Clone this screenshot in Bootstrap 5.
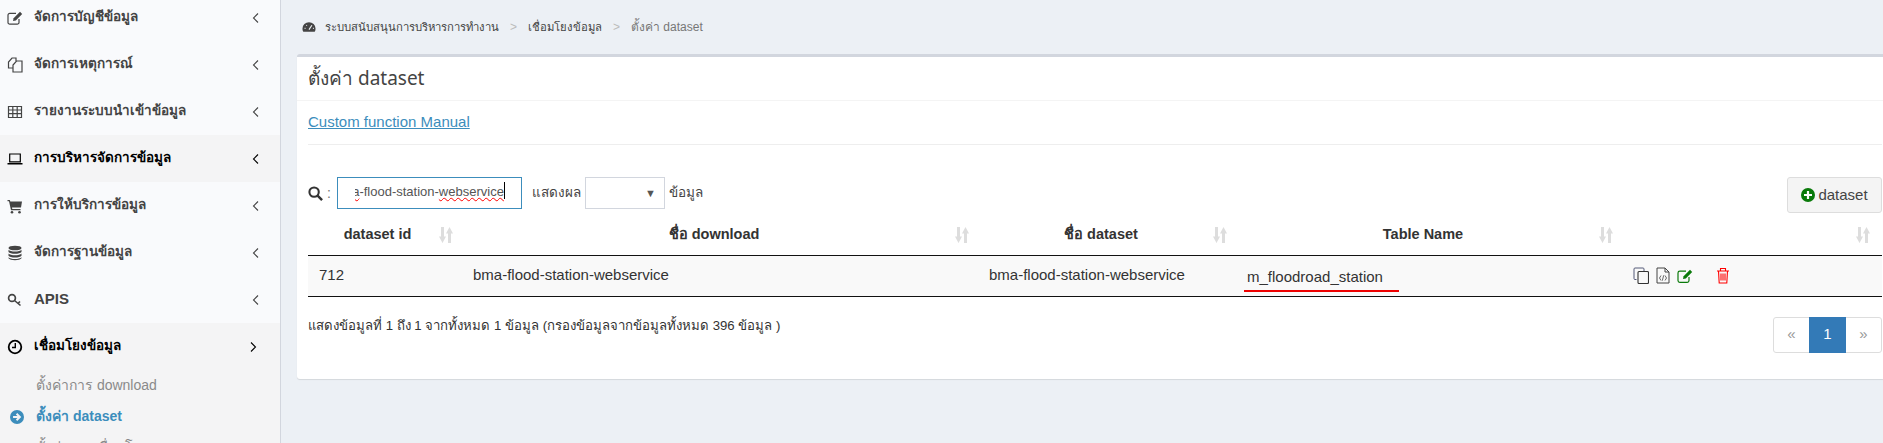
<!DOCTYPE html>
<html lang="th">
<head>
<meta charset="utf-8">
<title>ตั้งค่า dataset</title>
<link rel="stylesheet" href="https://cdn.jsdelivr.net/npm/bootstrap@5.3.0/dist/css/bootstrap.min.css">
<style>
html,body{height:443px;overflow:hidden}
body{background:#ecf0f5;font-family:"Liberation Sans","Noto Sans",sans-serif;font-size:15px;color:#333}
.app-shell{height:443px;overflow:hidden}
.side-col{width:281px;flex:none;background:#f9fafc;border-right:1px solid #d2d6de;overflow:hidden;height:443px;font-size:13.5px}
.side-list{margin:-6px 0 0;padding:0;list-style:none}
.side-row{height:47px;padding:0 20px 0 7px;font-weight:700;color:#444;gap:11px}
.side-row .ico{width:16px;height:16px;flex:none}
.side-row .lbl{flex:1}
.side-row .lbl-latin{font-size:15px}
.side-row.on{background:#f4f4f5;color:#000}
.side-open{background:#f4f4f5}
.side-open .side-row{color:#000;padding-right:23px}
.sub-row{height:31px;padding-left:36px;color:#8a8a8a;font-size:14px}
.sub-row.cur{color:#3c8dbc;font-weight:700;padding-left:10px;gap:12px}
.sub-row.cur svg{width:14px;height:14px;flex:none}
.crumb-bar{height:54px;padding-left:21px;font-size:11.3px;color:#444;gap:9px}
.crumb-sep{color:#bbb;margin:0 2px;font-size:12px}
.crumb-last{color:#777;font-size:12px}
.crumb-ico{width:14px;height:14px}
.main-box{margin-left:16px;height:325px;background:#fff;border-top:3px solid #d2d6de;border-radius:3px 0 0 3px;box-shadow:0 1px 1px rgba(0,0,0,.1)}
.box-head{height:44px;padding:0 11px;border-bottom:1px solid #f4f4f4;font-family:"Noto Sans",sans-serif;font-size:19px;color:#444}
.box-link-wrap{margin:0 1px 0 11px;height:44px;border-bottom:1px solid #eee}
.box-link{color:#3c8dbc}
.tool-row{margin:32px 1px 0 11px;height:36px;font-size:14px}
.q-ico{width:15px;height:15px}
.q-colon{margin:0 6px 0 4px;color:#777}
.fake-input{width:185px;height:32px;border:1px solid #3c8dbc;padding:0 16px 0 17px;color:#555;overflow:hidden;white-space:nowrap;border-radius:0;font-size:13px}
.fake-input .clip{overflow:hidden;display:flex;justify-content:flex-end;width:100%;padding-bottom:2px}
.spell{text-decoration:underline wavy red 1px}
.caret-mark{border-right:1px solid #000;height:17px}
.len-wrap{margin-left:10px;gap:4px;color:#444;font-size:13.5px}
.len-select{width:80px;height:32px;border:1px solid #d2d6de;padding-right:8px;color:#555;font-size:11px}
.add-btn{height:36px;width:95px;margin-left:auto;background:#f4f4f4;border:1px solid #ddd;border-radius:3px;color:#444;font-size:15px;padding:0;gap:3px}
.add-btn svg{width:14px;height:14px}
.data-wrap{margin:1px 1px 0 11px}
.data-table{table-layout:fixed;width:1574px;margin:0;border-collapse:collapse}
.data-table th{height:41px;padding:1px 12px 0 8px;border-bottom:1px solid #111;font-weight:700;font-size:14.5px;color:#333;background:#fff;vertical-align:middle}
.data-table td{height:41px;padding:0 8px;background:#f9f9f9;border-bottom:1px solid #111;color:#333;vertical-align:middle;box-shadow:none}
.data-table td:first-child{padding-left:11px}
.sort-ico{width:14px;height:16px;flex:none}
.mark-line{display:inline-block;border-bottom:2px solid #e00;padding:0 16px 5px 3px;margin:6px 0 -6px -3px;line-height:1.1}
.act-ico{width:14px;height:17px;flex:none}
.act-ico.wide{width:16px}
.foot-row{margin:20px 1px 0 11px}
.foot-info{line-height:15px;padding-top:1px;color:#333;font-size:13.2px}
.pager{margin:0}
.pager .page-link{width:37px;height:36px;padding:0;display:flex;align-items:center;justify-content:center;color:#999;border-color:#ddd;font-size:15px}
.pager .page-item:first-child .page-link{border-radius:3px 0 0 3px}
.pager .page-item:last-child .page-link{border-radius:0 3px 3px 0}
.pager .page-item.active .page-link{background:#337ab7;border-color:#337ab7;color:#fff}
</style>
</head>
<body>
<svg width="0" height="0" class="d-none">
 <symbol id="i-edit" viewBox="0 0 16 16"><path d="M12 9v3.400A1.800 1.800 0 0 1 10.200 14.200H2.800A1.800 1.800 0 0 1 1 12.400V5.200A1.800 1.800 0 0 1 2.800 3.400H9" fill="none" stroke="currentColor" stroke-width="1.200"/><path d="M6 11l.6-2.800 6.400-6.400 2.200 2.200-6.400 6.400z" fill="currentColor"/></symbol>
 <symbol id="i-files" viewBox="0 0 16 16"><path d="M6 11H1.500V5l3.500-4h4v3" fill="none" stroke="currentColor" stroke-width="1.200"/><path d="M6 15V8l3.500-4H15v11z" fill="none" stroke="currentColor" stroke-width="1.200"/></symbol>
 <symbol id="i-table" viewBox="0 0 16 16"><path d="M1.500 2.500h13v11h-13zM1.500 6h13M1.500 9.700h13M5.800 2.500v11M10.200 2.500v11" fill="none" stroke="currentColor" stroke-width="1.200"/></symbol>
 <symbol id="i-laptop" viewBox="0 0 16 16"><path d="M2.700 3h10.600v7.800H2.700z" fill="none" stroke="currentColor" stroke-width="1.200"/><path d="M.5 12h15v1.500H.5z" fill="currentColor"/></symbol>
 <symbol id="i-cart" viewBox="0 0 16 16"><path d="M.5 2h2.300l.5 1.500H15l-1 6H5l.3 1.500H13.500v1.300H4L2 3.300H.5z" fill="currentColor"/><circle cx="5" cy="14.200" r="1.300" fill="currentColor"/><circle cx="12.500" cy="14.200" r="1.300" fill="currentColor"/></symbol>
 <symbol id="i-db" viewBox="0 0 16 16"><ellipse cx="8" cy="3" rx="6.500" ry="2.300" fill="currentColor"/><path d="M1.500 4.700c1.500 2.400 11.500 2.400 13 0V7c-1.500 2.400-11.500 2.400-13 0zM1.500 8.500c1.500 2.400 11.500 2.400 13 0v2.300c-1.500 2.400-11.500 2.400-13 0zM1.500 12.200c1.500 2.400 11.500 2.400 13 0v1c-1.500 2.600-11.500 2.600-13 0z" fill="currentColor"/></symbol>
 <symbol id="i-key" viewBox="0 0 16 16"><circle cx="5" cy="6" r="3.400" fill="none" stroke="currentColor" stroke-width="1.700"/><path d="M7.500 8.500l6 5M11 11.300l2-1.800" fill="none" stroke="currentColor" stroke-width="1.600"/></symbol>
 <symbol id="i-clock" viewBox="0 0 16 16"><circle cx="8" cy="8" r="6.300" fill="none" stroke="currentColor" stroke-width="1.800"/><path d="M8.300 4v4.500H5" fill="none" stroke="currentColor" stroke-width="1.400"/></symbol>
 <symbol id="i-go" viewBox="0 0 16 16"><circle cx="8" cy="8" r="8" fill="currentColor"/><path d="M3.500 8h7M7.500 4.300L11.300 8l-3.800 3.700" fill="none" stroke="#f4f4f5" stroke-width="2.200"/></symbol>
 <symbol id="i-left" viewBox="0 0 8 12"><path d="M6 1.500L1.500 6 6 10.500" fill="none" stroke="currentColor" stroke-width="1.100"/></symbol>
 <symbol id="i-right" viewBox="0 0 8 12"><path d="M2 1.500L6.500 6 2 10.500" fill="none" stroke="currentColor" stroke-width="1.100"/></symbol>
 <symbol id="i-sort" viewBox="0 0 14 16"><path d="M3.500 0v10" stroke="#ddd" stroke-width="3"/><path d="M0 9.500h7L3.500 16zM7 6.500h7L10.500 0z" fill="#ddd"/><path d="M10.500 16V6" stroke="#ddd" stroke-width="3"/></symbol>
 <symbol id="i-search" viewBox="0 0 16 16"><circle cx="6.500" cy="6.500" r="5" fill="none" stroke="currentColor" stroke-width="2.200"/><path d="M10.200 10.200L15 15" stroke="currentColor" stroke-width="2.600"/></symbol>
 <symbol id="i-gauge" viewBox="0 0 16 16"><path d="M8 2.500a7.500 7.500 0 0 0-7.500 7.500c0 1.500.4 2.600 1 3.500h13c.6-.9 1-2 1-3.500A7.500 7.500 0 0 0 8 2.500z" fill="currentColor"/><path d="M8 11l3.300-5M3 9.500h1M5 5.800l.6.8M12.500 9.500h1" stroke="#ecf0f5" stroke-width="1.300"/></symbol>
 <symbol id="i-plus" viewBox="0 0 14 14"><circle cx="7" cy="7" r="7" fill="#0a7a0a"/><path d="M7 3v8M3 7h8" stroke="#fff" stroke-width="2.200"/></symbol>
 <symbol id="i-copy" viewBox="0 0 16 17"><path d="M3.500 12.500H2a1 1 0 0 1-1-1V2a1 1 0 0 1 1-1h8a1 1 0 0 1 1 1v2" fill="none" stroke="#555a78" stroke-width="1"/><path d="M6 4.500h8.500a1 1 0 0 1 1 1v10a1 1 0 0 1-1 1H6a1 1 0 0 1-1-1v-10a1 1 0 0 1 1-1z" fill="none" stroke="#333" stroke-width="1.100"/></symbol>
 <symbol id="i-code" viewBox="0 0 14 17"><path d="M1 1h8l4 4v11H1zM9 1v4h4" fill="none" stroke="#444" stroke-width="1"/><path d="M5 8.500L3.500 11 5 13.500M9 8.500l1.500 2.500L9 13.500M7.700 8.300l-1.400 5.400" fill="none" stroke="#444" stroke-width=".8"/></symbol>
 <symbol id="i-pen" viewBox="0 0 16 17"><path d="M12 10v3.600A1.800 1.800 0 0 1 10.200 15.400H2.800A1.800 1.800 0 0 1 1 13.600V6A1.800 1.800 0 0 1 2.800 4.200H9" fill="none" stroke="#0a7a0a" stroke-width="1.200"/><path d="M6 12l.6-2.800 6.400-6.400 2.200 2.200-6.400 6.400z" fill="#0a7a0a"/></symbol>
 <symbol id="i-trash" viewBox="0 0 14 17"><path d="M1 4h12M4.500 4V1.500h5V4M2.500 4l.7 12h7.600l.7-12M5 6.500v7M7 6.500v7M9 6.500v7" fill="none" stroke="#f00" stroke-width="1.100"/></symbol>
</svg>
<div class="app-shell d-flex">
 <aside class="side-col">
  <ul class="side-list">
   <li class="side-row d-flex align-items-center"><svg class="ico"><use href="#i-edit"/></svg><span class="lbl">จัดการบัญชีข้อมูล</span><svg width="8" height="12"><use href="#i-left"/></svg></li>
   <li class="side-row d-flex align-items-center"><svg class="ico"><use href="#i-files"/></svg><span class="lbl">จัดการเหตุการณ์</span><svg width="8" height="12"><use href="#i-left"/></svg></li>
   <li class="side-row d-flex align-items-center"><svg class="ico"><use href="#i-table"/></svg><span class="lbl">รายงานระบบนำเข้าข้อมูล</span><svg width="8" height="12"><use href="#i-left"/></svg></li>
   <li class="side-row on d-flex align-items-center"><svg class="ico"><use href="#i-laptop"/></svg><span class="lbl">การบริหารจัดการข้อมูล</span><svg width="8" height="12"><use href="#i-left"/></svg></li>
   <li class="side-row d-flex align-items-center"><svg class="ico"><use href="#i-cart"/></svg><span class="lbl">การให้บริการข้อมูล</span><svg width="8" height="12"><use href="#i-left"/></svg></li>
   <li class="side-row d-flex align-items-center"><svg class="ico"><use href="#i-db"/></svg><span class="lbl">จัดการฐานข้อมูล</span><svg width="8" height="12"><use href="#i-left"/></svg></li>
   <li class="side-row d-flex align-items-center"><svg class="ico"><use href="#i-key"/></svg><span class="lbl lbl-latin">APIS</span><svg width="8" height="12"><use href="#i-left"/></svg></li>
   <li class="side-open">
    <div class="side-row d-flex align-items-center"><svg class="ico"><use href="#i-clock"/></svg><span class="lbl">เชื่อมโยงข้อมูล</span><svg width="8" height="12"><use href="#i-right"/></svg></div>
    <div class="sub-row d-flex align-items-center">ตั้งค่าการ download</div>
    <div class="sub-row cur d-flex align-items-center"><svg><use href="#i-go"/></svg><span>ตั้งค่า dataset</span></div>
    <div class="sub-row d-flex align-items-center">ตั้งค่าการเชื่อมโยง</div>
   </li>
  </ul>
 </aside>
 <main class="flex-grow-1">
  <div class="crumb-bar d-flex align-items-center">
   <svg class="crumb-ico"><use href="#i-gauge"/></svg><span>ระบบสนับสนุนการบริหารการทำงาน</span><span class="crumb-sep">&gt;</span><span>เชื่อมโยงข้อมูล</span><span class="crumb-sep">&gt;</span><span class="crumb-last">ตั้งค่า dataset</span>
  </div>
  <section class="main-box">
   <div class="box-head d-flex align-items-center">ตั้งค่า dataset</div>
   <div class="box-link-wrap d-flex align-items-center"><a class="box-link" href="#">Custom function Manual</a></div>
   <div class="tool-row d-flex align-items-start">
    <div class="d-flex align-items-center" style="height:32px"><svg class="q-ico"><use href="#i-search"/></svg><span class="q-colon">:</span></div>
    <div class="fake-input d-flex align-items-center"><div class="clip"><span><span class="spell">bma</span>-flood-station-<span class="spell">webservice</span></span><span class="caret-mark"></span></div></div>
    <div class="len-wrap d-flex align-items-center" style="height:32px"><span>แสดงผล</span><span class="len-select d-flex align-items-center justify-content-end">▼</span><span>ข้อมูล</span></div>
    <button type="button" class="btn add-btn d-flex align-items-center justify-content-center"><svg><use href="#i-plus"/></svg>dataset</button>
   </div>
   <div class="data-wrap">
    <table class="table data-table">
     <colgroup><col style="width:157px"><col style="width:516px"><col style="width:258px"><col style="width:386px"><col style="width:257px"></colgroup>
     <thead><tr>
      <th><div class="d-flex align-items-center"><span class="flex-grow-1 text-center">dataset id</span><svg class="sort-ico"><use href="#i-sort"/></svg></div></th>
      <th><div class="d-flex align-items-center"><span class="flex-grow-1 text-center">ชื่อ download</span><svg class="sort-ico"><use href="#i-sort"/></svg></div></th>
      <th><div class="d-flex align-items-center"><span class="flex-grow-1 text-center">ชื่อ dataset</span><svg class="sort-ico"><use href="#i-sort"/></svg></div></th>
      <th><div class="d-flex align-items-center"><span class="flex-grow-1 text-center">Table Name</span><svg class="sort-ico"><use href="#i-sort"/></svg></div></th>
      <th><div class="d-flex align-items-center"><span class="flex-grow-1 text-center"></span><svg class="sort-ico"><use href="#i-sort"/></svg></div></th>
     </tr></thead>
     <tbody><tr>
      <td>712</td><td>bma-flood-station-webservice</td><td>bma-flood-station-webservice</td>
      <td><span class="mark-line">m_floodroad_station</span></td>
      <td><div class="d-flex align-items-center" style="gap:7px"><svg class="act-ico wide"><use href="#i-copy"/></svg><svg class="act-ico"><use href="#i-code"/></svg><svg class="act-ico wide"><use href="#i-pen"/></svg><svg class="act-ico" style="margin-left:16px"><use href="#i-trash"/></svg></div></td>
     </tr></tbody>
    </table>
   </div>
   <div class="foot-row d-flex justify-content-between align-items-start">
    <div class="foot-info">แสดงข้อมูลที่ 1 ถึง 1 จากทั้งหมด 1 ข้อมูล (กรองข้อมูลจากข้อมูลทั้งหมด 396 ข้อมูล )</div>
    <ul class="pagination pager">
     <li class="page-item"><a class="page-link" href="#">«</a></li>
     <li class="page-item active"><a class="page-link" href="#">1</a></li>
     <li class="page-item"><a class="page-link" href="#">»</a></li>
    </ul>
   </div>
  </section>
 </main>
</div>
</body>
</html>
